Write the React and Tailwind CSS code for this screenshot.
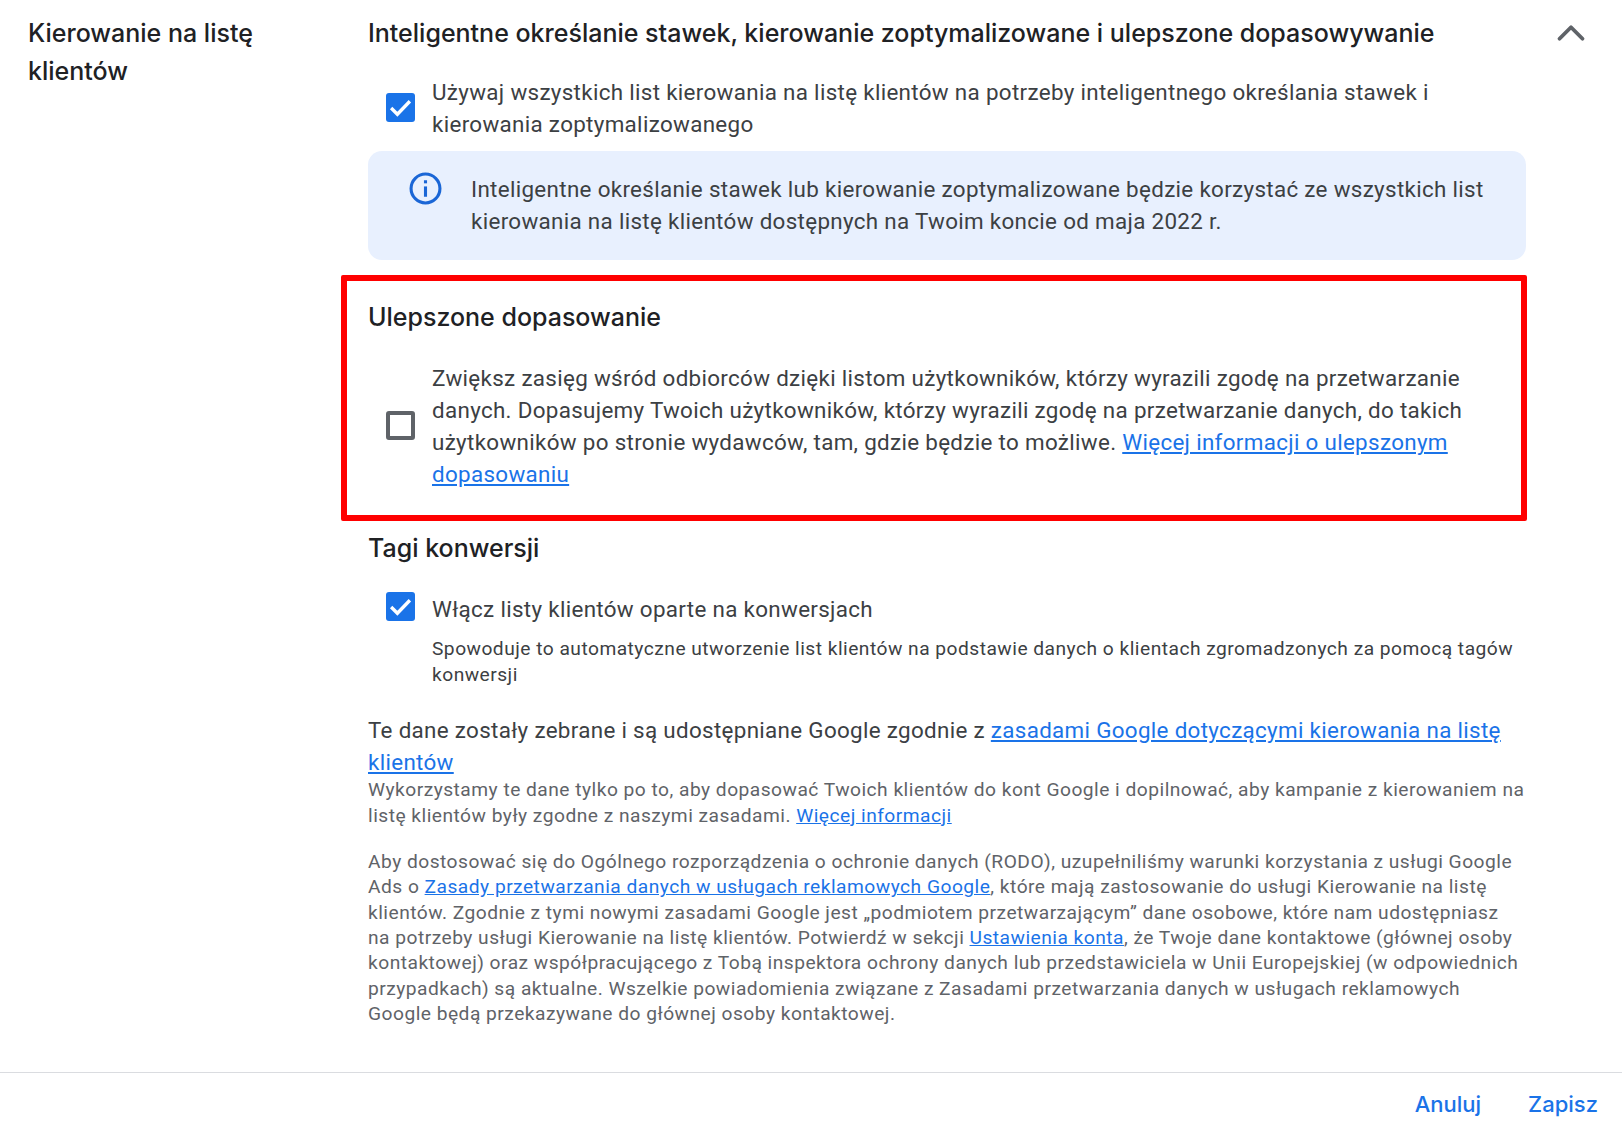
import { ChevronUp } from 'lucide-react';

const link = 'text-[#1a73e8] underline';
const body = 'text-[22.4px] leading-[32px] tracking-[0.32px] whitespace-nowrap';
const small = 'text-[19.2px] tracking-[0.48px] whitespace-nowrap';

function CheckBox({ checked }) {
  if (!checked) {
    return <span className="block w-[29px] h-[29px] rounded-[3px] border-[4px] border-[#5f6368] bg-white" />;
  }
  return (
    <span className="flex items-center justify-center w-[29px] h-[29px] rounded-[3px] bg-[#1a73e8]">
      <svg width="25" height="25" viewBox="0 0 24 24" fill="none">
        <path d="M3 12.5l6 6L21 6" stroke="#fff" strokeWidth="3.2" />
      </svg>
    </span>
  );
}

function SectionTitle({ children, className = '' }) {
  return <h3 className={`font-['Inter',sans-serif] text-[25px] leading-[32px] font-medium text-[#202124] ${className}`}>{children}</h3>;
}

export default function App() {
  return (
    <div className="w-[1622px] h-[1136px] bg-white font-['Roboto',sans-serif] text-[#3c4043] flex flex-col overflow-hidden">
      <div className="flex flex-1 pt-[17px]">
        <div className="w-[368px] pl-7 shrink-0 font-['Inter',sans-serif] text-[25px] leading-[38px] -mt-[3px] font-medium text-[#202124]">
          Kierowanie na listę<br />klientów
        </div>
        <div className="w-[1158px] shrink-0">
          <SectionTitle>Inteligentne określanie stawek, kierowanie zoptymalizowane i ulepszone dopasowywanie</SectionTitle>

          <div className="flex items-center mt-[27px]">
            <div className="w-[64px] pl-[18px] shrink-0 mb-[2px]"><CheckBox checked /></div>
            <p className={body}>
              Używaj wszystkich list kierowania na listę klientów na potrzeby inteligentnego określania stawek i<br />kierowania zoptymalizowanego
            </p>
          </div>

          <div className="flex mt-[11px] h-[109px] rounded-[14px] bg-[#e8f0fe] pt-[22px] pl-[41px]">
            <svg className="shrink-0 w-[33px] h-[33px] -mt-[1px]" viewBox="0 0 32 32" fill="none">
              <circle cx="16" cy="16" r="14" stroke="#1a66d6" strokeWidth="3" />
              <rect x="14.5" y="14" width="3" height="10" fill="#1a66d6" />
              <rect x="14.5" y="8" width="3" height="3" fill="#1a66d6" />
            </svg>
            <p className={`ml-[29px] ${body}`}>
              Inteligentne określanie stawek lub kierowanie zoptymalizowane będzie korzystać ze wszystkich list<br />kierowania na listę klientów dostępnych na Twoim koncie od maja 2022 r.
            </p>
          </div>

          <div className="-ml-[27px] mt-[15px] w-[1186px] h-[246px] border-[6px] border-[#ff0000] rounded-[2px] pl-[21px] pt-[20px]">
            <SectionTitle>Ulepszone dopasowanie</SectionTitle>
            <div className="flex items-center mt-[29px]">
              <div className="w-[64px] pl-[18px] shrink-0 mb-[2px]"><CheckBox /></div>
              <p className={body}>
                Zwiększ zasięg wśród odbiorców dzięki listom użytkowników, którzy wyrazili zgodę na przetwarzanie<br />
                danych. Dopasujemy Twoich użytkowników, którzy wyrazili zgodę na przetwarzanie danych, do takich<br />
                użytkowników po stronie wydawców, tam, gdzie będzie to możliwe. <a className={link}>Więcej informacji o ulepszonym<br />dopasowaniu</a>
              </p>
            </div>
          </div>

          <SectionTitle className="mt-[11px]">Tagi konwersji</SectionTitle>
          <div className="flex items-center mt-[28px]">
            <div className="w-[64px] pl-[18px] shrink-0 mb-[4px]"><CheckBox checked /></div>
            <p className={body}>Włącz listy klientów oparte na konwersjach</p>
          </div>
          <p className={`ml-[64px] mt-[11px] leading-[26px] ${small}`}>
            Spowoduje to automatyczne utworzenie list klientów na podstawie danych o klientach zgromadzonych za pomocą tagów<br />konwersji
          </p>

          <p className={`mt-[26px] ${body}`}>
            Te dane zostały zebrane i są udostępniane Google zgodnie z <a className={link}>zasadami Google dotyczącymi kierowania na listę<br />klientów</a>
          </p>
          <p className={`-mt-[1px] leading-[26px] text-[#5f6368] ${small}`}>
            Wykorzystamy te dane tylko po to, aby dopasować Twoich klientów do kont Google i dopilnować, aby kampanie z kierowaniem na<br />
            listę klientów były zgodne z naszymi zasadami. <a className={link}>Więcej informacji</a>
          </p>
          <p className={`mt-[20px] leading-[25.35px] text-[#5f6368] ${small}`}>
            Aby dostosować się do Ogólnego rozporządzenia o ochronie danych (RODO), uzupełniliśmy warunki korzystania z usługi Google<br />
            Ads o <a className={link}>Zasady przetwarzania danych w usługach reklamowych Google</a>, które mają zastosowanie do usługi Kierowanie na listę<br />
            klientów. Zgodnie z tymi nowymi zasadami Google jest „podmiotem przetwarzającym” dane osobowe, które nam udostępniasz<br />
            na potrzeby usługi Kierowanie na listę klientów. Potwierdź w sekcji <a className={link}>Ustawienia konta</a>, że Twoje dane kontaktowe (głównej osoby<br />
            kontaktowej) oraz współpracującego z Tobą inspektora ochrony danych lub przedstawiciela w Unii Europejskiej (w odpowiednich<br />
            przypadkach) są aktualne. Wszelkie powiadomienia związane z Zasadami przetwarzania danych w usługach reklamowych<br />
            Google będą przekazywane do głównej osoby kontaktowej.
          </p>
        </div>
        <div className="flex-1 flex justify-center">
          <ChevronUp className="w-[46px] h-[46px] -mt-[7px] mr-[6px] text-[#5f6368]" strokeWidth={2} absoluteStrokeWidth />
        </div>
      </div>
      <div className="h-[64px] border-t border-[#dadce0] flex items-center justify-end pr-6 gap-[47px] font-['Inter',sans-serif] text-[22px] font-medium text-[#1a73e8]">
        <span>Anuluj</span>
        <span>Zapisz</span>
      </div>
    </div>
  );
}
